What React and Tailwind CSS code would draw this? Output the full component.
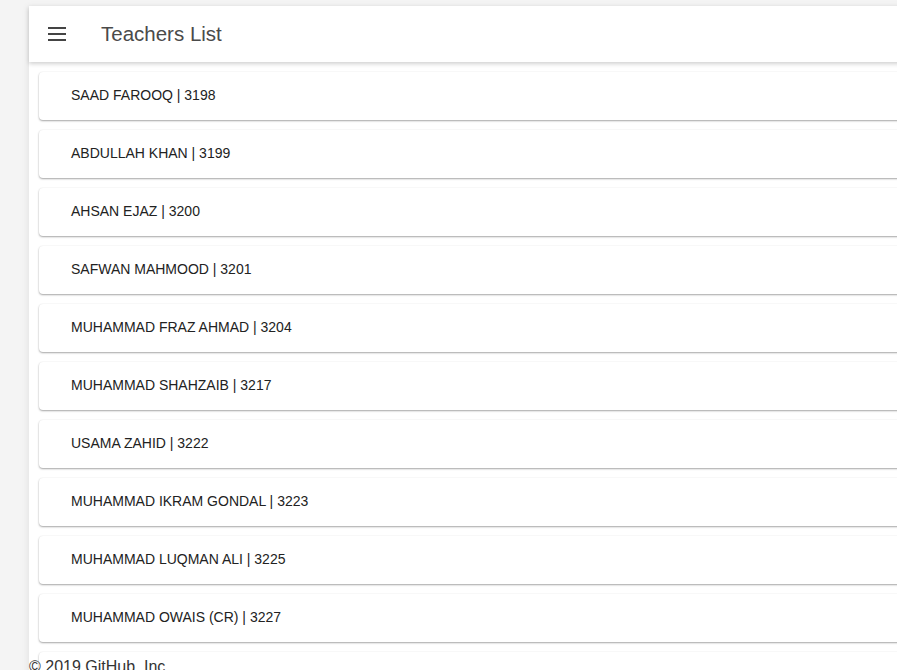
const teachers = [
  "SAAD FAROOQ | 3198",
  "ABDULLAH KHAN | 3199",
  "AHSAN EJAZ | 3200",
  "SAFWAN MAHMOOD | 3201",
  "MUHAMMAD FRAZ AHMAD | 3204",
  "MUHAMMAD SHAHZAIB | 3217",
  "USAMA ZAHID | 3222",
  "MUHAMMAD IKRAM GONDAL | 3223",
  "MUHAMMAD LUQMAN ALI | 3225",
  "MUHAMMAD OWAIS (CR) | 3227",
  "",
];

const App = () => {
  return (
    <div className="relative h-[670px] w-[897px] overflow-hidden bg-[#f4f4f4] font-['Liberation_Sans',Arial,sans-serif]">
      <div className="ml-[29px] mt-[6px] w-[900px] bg-white shadow-[-2px_0_6px_rgba(0,0,0,0.06)]">
        {/* Top bar */}
        <div className="flex h-[56px] items-center bg-white shadow-[0_2px_4px_rgba(0,0,0,0.18)]">
          <svg className="ml-[19px] h-[14px] w-[18px]" viewBox="0 0 18 14">
            <rect x="0" y="0" width="18" height="2" fill="#444" />
            <rect x="0" y="6" width="18" height="2" fill="#444" />
            <rect x="0" y="12" width="18" height="2" fill="#444" />
          </svg>
          <h1 className="ml-[35px] text-[20.5px] text-[#4a4a4a]">Teachers List</h1>
        </div>

        {/* List */}
        <div className="flex flex-col gap-[10px] px-[10px] pt-[10px] pb-4">
          {teachers.map((t, i) => (
            <div
              key={i}
              className="flex h-[48px] items-center rounded-[4px] bg-white pb-[2px] pl-[32px] text-[14px] text-[#222] shadow-[0_1px_2px_rgba(0,0,0,0.35),0_0_2px_rgba(0,0,0,0.06)]"
            >
              {t}
            </div>
          ))}
        </div>
      </div>

      <div className="absolute left-[29px] top-[658px] text-[16px] leading-[18px] text-[#333]">
        © 2019 GitHub, Inc.
      </div>
    </div>
  );
};

export default App;
